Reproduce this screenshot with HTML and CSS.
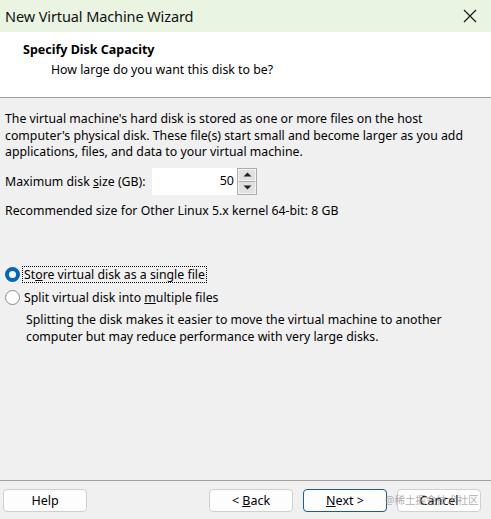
FILE: index.html
```html
<!DOCTYPE html>
<html>
<head>
<meta charset="utf-8">
<link rel="stylesheet" href="styles.css">
</head>
<body>
<div class="window">
  <div class="titlebar">
    <span class="title">New Virtual Machine Wizard</span>
    <svg class="close" width="14" height="14" viewBox="0 0 14 14"><path d="M1 1L13 13M13 1L1 13" stroke="#1a1a1a" stroke-width="1.2" fill="none"/></svg>
  </div>
  <div class="header">
    <div class="h-title">Specify Disk Capacity</div>
    <div class="h-sub">How large do you want this disk to be?</div>
  </div>
  <div class="content">
    <p class="para">The virtual machine's hard disk is stored as one or more files on the host<br>computer's physical disk. These file(s) start small and become larger as you add<br>applications, files, and data to your virtual machine.</p>
    <div class="size-row">
      <span class="label">Maximum disk <u>s</u>ize (GB):</span>
      <div class="spinner">
        <div class="spin-input">50</div>
        <div class="spin-btns">
          <div class="spin-btn"><svg width="9" height="5" viewBox="0 0 9 5"><path d="M0.5 4.5L4.5 0.5L8.5 4.5Z" fill="#222"/></svg></div>
          <div class="spin-btn"><svg width="9" height="5" viewBox="0 0 9 5"><path d="M0.5 0.5L4.5 4.5L8.5 0.5Z" fill="#222"/></svg></div>
        </div>
      </div>
    </div>
    <p class="rec">Recommended size for Other Linux 5.x kernel 64-bit: 8 GB</p>
    <div class="radios">
      <div class="radio-row">
        <span class="radio checked"></span>
        <span class="radio-label focus">St<u>o</u>re virtual disk as a single file</span>
      </div>
      <div class="radio-row">
        <span class="radio"></span>
        <span class="radio-label">Split virtual disk into <u>m</u>ultiple files</span>
      </div>
      <p class="desc">Splitting the disk makes it easier to move the virtual machine to another<br>computer but may reduce performance with very large disks.</p>
    </div>
  </div>
  <div class="footer">
    <button class="btn">Help</button>
    <div class="spacer"></div>
    <button class="btn">&lt; <u>B</u>ack</button>
    <button class="btn primary"><u>N</u>ext &gt;</button>
    <button class="btn">Cancel</button>
    <span class="watermark">@稀土掘金技术社区</span>
  </div>
</div>
</body>
</html>
```
FILE: styles.css
```css
* { box-sizing: border-box; }
html, body { margin: 0; padding: 0; }
body {
  width: 491px;
  height: 519px;
  background: #f0f0f0;
  font-family: "Noto Sans", "Noto Sans CJK SC", sans-serif;
  font-size: 12.3px;
  color: #000;
  overflow: hidden;
}
.window {
  width: 491px;
  height: 519px;
  display: flex;
  flex-direction: column;
}
.titlebar {
  height: 32px;
  background: #e9f4e3;
  display: flex;
  align-items: center;
  padding-left: 5px;
  padding-right: 14px;
}
.title {
  font-size: 14.5px;
  flex: 1;
  color: #111;
  letter-spacing: -0.1px;
}
.close { display: block; }
.header {
  height: 66px;
  background: #fff;
  border-bottom: 1px solid #a0a0a0;
  padding-top: 9px;
}
.h-title {
  font-weight: bold;
  font-size: 12.5px;
  padding-left: 23px;
  line-height: 18px;
}
.h-sub {
  padding-left: 51px;
  line-height: 18px;
  margin-top: 2px;
}
.content {
  flex: 1;
  padding: 13px 5px 0 5px;
}
.para {
  margin: 0;
  line-height: 16.5px;
}
.size-row {
  display: flex;
  align-items: center;
  margin-top: 7px;
  height: 27px;
}
.label { width: 147px; }
.spinner {
  display: flex;
  height: 27px;
}
.spin-input {
  width: 85px;
  background: #fff;
  text-align: right;
  padding-right: 3px;
  line-height: 25px;
  font-size: 12.5px;
}
.spin-btns {
  width: 20px;
  display: flex;
  flex-direction: column;
  border: 1px solid #adadad;
  background: #e1e1e1;
}
.spin-btn {
  flex: 1;
  display: flex;
  align-items: center;
  justify-content: center;
  border: 1px solid #f4f4f4;
}
.spin-btn + .spin-btn { border-top: 1px solid #adadad; }
.rec {
  margin: 8px 0 0 0;
  line-height: 16.5px;
}
.radios { margin-top: 47px; }
.radio-row {
  display: flex;
  align-items: center;
  height: 16px;
  margin-bottom: 7px;
}
.radio-row + .radio-row { margin-bottom: 7px; }
.radio {
  width: 15px;
  height: 15px;
  border-radius: 50%;
  border: 1px solid #8a8a8a;
  background: #fff;
  margin-right: 4px;
  flex: none;
}
.radio.checked {
  border: 4px solid #0067c0;
  background: #fff;
}
.radio-label { line-height: 15px; }
.radio-label.focus {
  outline: 1px dotted #000;
  outline-offset: 0px;
  padding: 0 1px;
  margin-left: -1px;
}
.desc {
  margin: 0;
  padding-left: 21px;
  line-height: 16.5px;
}
.footer {
  position: relative;
  height: 39px;
  border-top: 1px solid #a0a0a0;
  display: flex;
  align-items: flex-start;
  padding: 8px 10px 0 3px;
  gap: 10px;
}
.spacer { flex: 1; }
.btn {
  width: 84px;
  height: 23px;
  background: #fdfdfd;
  border: 1px solid #d0d0d0;
  border-radius: 4px;
  font-family: inherit;
  font-size: 12.5px;
  color: #000;
  padding: 0;
  line-height: 20px;
}
.btn.primary {
  border: 1px solid #1b5e86;
  box-shadow: inset 0 0 0 1px #ffffff;
}
.watermark {
  position: absolute;
  left: 385px;
  top: 12px;
  font-size: 10.5px;
  line-height: 14px;
  white-space: nowrap;
  color: rgba(140,140,140,0.7);
  pointer-events: none;
}
```
